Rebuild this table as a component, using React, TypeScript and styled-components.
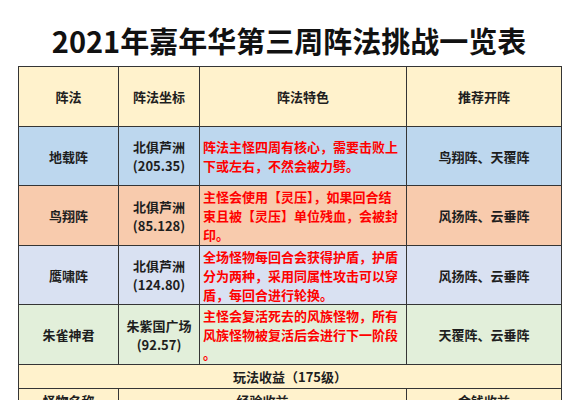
import React from "react";
import styled, { createGlobalStyle } from "styled-components";

const GlobalStyle = createGlobalStyle`
  html, body {
    margin: 0;
    padding: 0;
    background: #ffffff;
  }
  body {
    font-family: "Noto Sans CJK SC", "Microsoft YaHei", sans-serif;
    color: #1e1e1e;
  }
`;

const Page = styled.div`
  width: 578px;
  height: 400px;
  overflow: hidden;
  padding: 0 0 0 18px;
  box-sizing: border-box;
`;

const Title = styled.h1`
  margin: 0;
  padding-top: 14px;
  height: 52px;
  line-height: 52px;
  width: 542px;
  text-align: center;
  font-size: 29px;
  font-weight: 700;
  color: #111;
  white-space: nowrap;
`;

const Table = styled.table`
  width: 543px;
  border-collapse: collapse;
  table-layout: fixed;
`;

const Row = styled.tr<{ $bg: string }>`
  background: ${(p) => p.$bg};
`;

const Cell = styled.td<{ $h: number }>`
  height: ${(p) => p.$h - 1}px;
  border: 1px solid #353535;
  padding: 0 3px;
  text-align: center;
  vertical-align: middle;
  font-size: 13px;
  line-height: 19px;
  font-weight: 700;
  color: #1e1e1e;
  white-space: nowrap;
  overflow: hidden;
`;

const Desc = styled(Cell)`
  text-align: left;
  color: #ff0000;
`;

type Formation = {
  name: string;
  place: string;
  coord: string;
  desc: string[];
  advice: string;
  bg: string;
  h: number;
};

const formations: Formation[] = [
  {
    name: "地载阵",
    place: "北俱芦洲",
    coord: "(205.35)",
    desc: ["阵法主怪四周有核心，需要击败上", "下或左右，不然会被力劈。"],
    advice: "鸟翔阵、天覆阵",
    bg: "#bdd7ee",
    h: 59,
  },
  {
    name: "鸟翔阵",
    place: "北俱芦洲",
    coord: "(85.128)",
    desc: ["主怪会使用【灵压】，如果回合结", "束且被【灵压】单位残血，会被封", "印。"],
    advice: "风扬阵、云垂阵",
    bg: "#f8cbad",
    h: 60,
  },
  {
    name: "鹰啸阵",
    place: "北俱芦洲",
    coord: "(124.80)",
    desc: ["全场怪物每回合会获得护盾，护盾", "分为两种，采用同属性攻击可以穿", "盾，每回合进行轮换。"],
    advice: "风扬阵、云垂阵",
    bg: "#d9e1f2",
    h: 59,
  },
  {
    name: "朱雀神君",
    place: "朱紫国广场",
    coord: "(92.57)",
    desc: ["主怪会复活死去的风族怪物，所有", "风族怪物被复活后会进行下一阶段", "。"],
    advice: "天覆阵、云垂阵",
    bg: "#e2efda",
    h: 60,
  },
];

const Lines = ({ lines }: { lines: string[] }) => (
  <>
    {lines.map((l, i) => (
      <React.Fragment key={i}>
        {i > 0 && <br />}
        {l}
      </React.Fragment>
    ))}
  </>
);

export default function App() {
  return (
    <>
      <GlobalStyle />
      <Page>
        <Title>2021年嘉年华第三周阵法挑战一览表</Title>
        <Table>
          <colgroup>
            <col style={{ width: 100 }} />
            <col style={{ width: 81 }} />
            <col style={{ width: 207 }} />
            <col style={{ width: 155 }} />
          </colgroup>
          <tbody>
            <Row $bg="#fff2cc">
              <Cell $h={60}>阵法</Cell>
              <Cell $h={60}>阵法坐标</Cell>
              <Cell $h={60}>阵法特色</Cell>
              <Cell $h={60}>推荐开阵</Cell>
            </Row>
            {formations.map((f) => (
              <Row key={f.name} $bg={f.bg}>
                <Cell $h={f.h}>{f.name}</Cell>
                <Cell $h={f.h}>
                  <Lines lines={[f.place, f.coord]} />
                </Cell>
                <Desc $h={f.h}>
                  <Lines lines={f.desc} />
                </Desc>
                <Cell $h={f.h}>{f.advice}</Cell>
              </Row>
            ))}
            <Row $bg="#fff2cc">
              <Cell $h={24} colSpan={4}>
                玩法收益（175级）
              </Cell>
            </Row>
            <Row $bg="#fff2cc">
              <Cell $h={24}>怪物名称</Cell>
              <Cell $h={24} colSpan={2}>
                经验收益
              </Cell>
              <Cell $h={24}>金钱收益</Cell>
            </Row>
          </tbody>
        </Table>
      </Page>
    </>
  );
}
